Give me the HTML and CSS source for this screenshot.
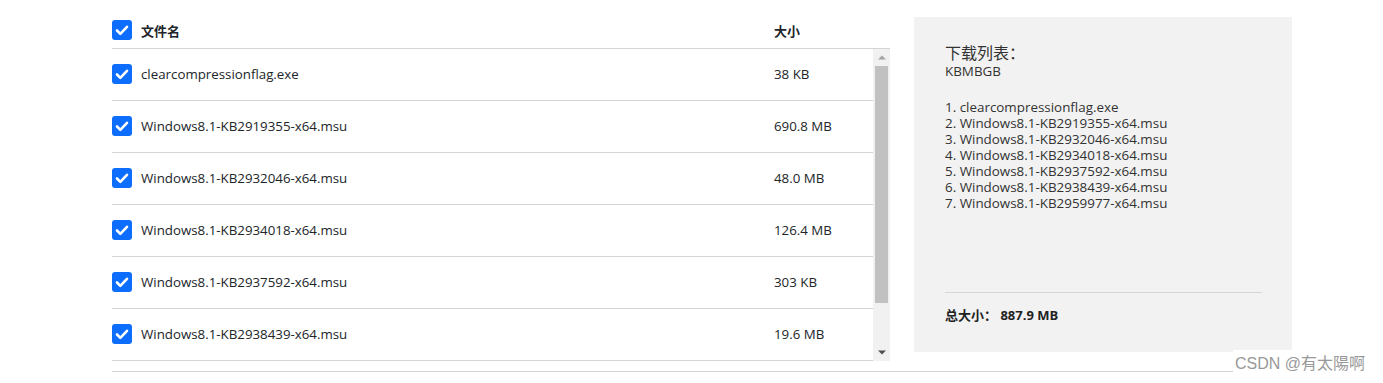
FILE: index.html
```html
<!DOCTYPE html>
<html>
<head>
  <meta charset="utf-8">
  <meta name="viewport" content="width=device-width, initial-scale=1">
  <title>下载列表</title>
  <link rel="stylesheet" href="styles.css">
</head>
<body>
  <div class="page">
    <div class="main">
      <!-- 文件表格 -->
      <div class="file-table">
        <div class="table-head">
          <div class="col-name">
            <span class="check"><svg viewBox="0 0 20 20" width="20" height="20"><rect width="20" height="20" rx="3" fill="#0d6efd"/><path d="M5 10.5l3.3 3.3L15 6.8" fill="none" stroke="#fff" stroke-width="2.6" stroke-linecap="round" stroke-linejoin="round"/></svg></span>
            <span>文件名</span>
          </div>
          <div class="col-size">大小</div>
        </div>
        <div class="table-body">
          <div class="rows">
            <div class="row">
              <div class="col-name">
                <span class="check"><svg viewBox="0 0 20 20" width="20" height="20"><rect width="20" height="20" rx="3" fill="#0d6efd"/><path d="M5 10.5l3.3 3.3L15 6.8" fill="none" stroke="#fff" stroke-width="2.6" stroke-linecap="round" stroke-linejoin="round"/></svg></span>
                <span>clearcompressionflag.exe</span>
              </div>
              <div class="col-size">38 KB</div>
            </div>
            <div class="row">
              <div class="col-name">
                <span class="check"><svg viewBox="0 0 20 20" width="20" height="20"><rect width="20" height="20" rx="3" fill="#0d6efd"/><path d="M5 10.5l3.3 3.3L15 6.8" fill="none" stroke="#fff" stroke-width="2.6" stroke-linecap="round" stroke-linejoin="round"/></svg></span>
                <span>Windows8.1-KB2919355-x64.msu</span>
              </div>
              <div class="col-size">690.8 MB</div>
            </div>
            <div class="row">
              <div class="col-name">
                <span class="check"><svg viewBox="0 0 20 20" width="20" height="20"><rect width="20" height="20" rx="3" fill="#0d6efd"/><path d="M5 10.5l3.3 3.3L15 6.8" fill="none" stroke="#fff" stroke-width="2.6" stroke-linecap="round" stroke-linejoin="round"/></svg></span>
                <span>Windows8.1-KB2932046-x64.msu</span>
              </div>
              <div class="col-size">48.0 MB</div>
            </div>
            <div class="row">
              <div class="col-name">
                <span class="check"><svg viewBox="0 0 20 20" width="20" height="20"><rect width="20" height="20" rx="3" fill="#0d6efd"/><path d="M5 10.5l3.3 3.3L15 6.8" fill="none" stroke="#fff" stroke-width="2.6" stroke-linecap="round" stroke-linejoin="round"/></svg></span>
                <span>Windows8.1-KB2934018-x64.msu</span>
              </div>
              <div class="col-size">126.4 MB</div>
            </div>
            <div class="row">
              <div class="col-name">
                <span class="check"><svg viewBox="0 0 20 20" width="20" height="20"><rect width="20" height="20" rx="3" fill="#0d6efd"/><path d="M5 10.5l3.3 3.3L15 6.8" fill="none" stroke="#fff" stroke-width="2.6" stroke-linecap="round" stroke-linejoin="round"/></svg></span>
                <span>Windows8.1-KB2937592-x64.msu</span>
              </div>
              <div class="col-size">303 KB</div>
            </div>
            <div class="row">
              <div class="col-name">
                <span class="check"><svg viewBox="0 0 20 20" width="20" height="20"><rect width="20" height="20" rx="3" fill="#0d6efd"/><path d="M5 10.5l3.3 3.3L15 6.8" fill="none" stroke="#fff" stroke-width="2.6" stroke-linecap="round" stroke-linejoin="round"/></svg></span>
                <span>Windows8.1-KB2938439-x64.msu</span>
              </div>
              <div class="col-size">19.6 MB</div>
            </div>
          </div>
          <!-- barra de desplazamiento -->
          <div class="scrollbar">
            <div class="scroll-btn"><svg width="8" height="5" viewBox="0 0 8 5"><path d="M0 4.5h8L4 .5z" fill="#a3a3a3"/></svg></div>
            <div class="scroll-thumb"></div>
            <div class="scroll-track"></div>
            <div class="scroll-btn"><svg width="8" height="5" viewBox="0 0 8 5"><path d="M0 .5h8L4 4.5z" fill="#505050"/></svg></div>
          </div>
        </div>
      </div>

      <!-- 下载列表面板 -->
      <div class="summary">
        <div class="summary-title">下载列表：</div>
        <div class="summary-id">KBMBGB</div>
        <ol class="summary-list">
          <li>clearcompressionflag.exe</li>
          <li>Windows8.1-KB2919355-x64.msu</li>
          <li>Windows8.1-KB2932046-x64.msu</li>
          <li>Windows8.1-KB2934018-x64.msu</li>
          <li>Windows8.1-KB2937592-x64.msu</li>
          <li>Windows8.1-KB2938439-x64.msu</li>
          <li>Windows8.1-KB2959977-x64.msu</li>
        </ol>
        <div class="summary-total">总大小： 887.9 MB</div>
      </div>
    </div>
    <div class="bottom-line"></div>
  </div>
  <div class="watermark">CSDN @有太陽啊</div>
</body>
</html>
```

FILE: styles.css
```css
/* Reset */
* {
  margin: 0;
  padding: 0;
  box-sizing: border-box;
}

body {
  background: #fff;
  color: #212529;
  font-family: "Open Sans", "Noto Sans CJK SC", sans-serif;
  font-size: 13.3px;
}

.page {
  padding: 17px 0 0 112px;
}

.main {
  display: flex;
  gap: 24px;
  align-items: flex-start;
}

/* Tabla de archivos */
.file-table {
  width: 778px;
}

.table-head {
  display: flex;
  align-items: center;
  height: 32px;
  padding-bottom: 5px;
  border-bottom: 1px solid #d4d4d4;
  font-size: 13px;
  font-weight: 700;
}

.table-body {
  display: flex;
  height: 312px;
}

.rows {
  flex: 1;
}

.row {
  display: flex;
  align-items: center;
  height: 52px;
  padding-bottom: 1px;
  border-bottom: 1px solid #d4d4d4;
}

.col-name {
  display: flex;
  align-items: center;
  gap: 9px;
  width: 662px;
}

.col-size {
  flex: 1;
}

.check {
  display: flex;
  width: 20px;
  height: 20px;
}

/* Scrollbar */
.scrollbar {
  display: flex;
  flex-direction: column;
  width: 17px;
  background: #f1f1f1;
}

.scroll-btn {
  display: flex;
  align-items: center;
  justify-content: center;
  height: 17px;
}

.scroll-thumb {
  height: 237px;
  margin: 0 2px;
  background: #c1c1c1;
}

.scroll-track {
  flex: 1;
}

/* Panel derecho */
.summary {
  display: flex;
  flex-direction: column;
  width: 378px;
  height: 335px;
  padding: 27px 30px 0 31px;
  background: #f2f2f2;
  color: #333;
}

.summary-title {
  font-size: 16px;
  line-height: 18px;
}

.summary-id {
  margin-top: 1px;
  font-size: 13.4px;
  line-height: 16px;
}

.summary-list {
  margin-top: 20px;
  list-style: decimal inside;
  font-size: 13.4px;
  line-height: 16px;
}

.summary-total {
  margin-top: auto;
  margin-bottom: 20px;
  padding-top: 12px;
  border-top: 1px solid #d6d6d6;
  height: 40px;
  font-size: 13px;
  font-weight: 700;
  color: #222;
}

.bottom-line {
  width: 1180px;
  margin-top: 10px;
  border-top: 1px solid #d4d4d4;
}

.watermark {
  position: absolute;
  right: 16px;
  bottom: 9px;
  padding: 0 2px;
  background: #fff;
  color: #999;
  font-family: "Liberation Sans", "Noto Sans CJK TC", sans-serif;
  font-size: 16px;
}
```
